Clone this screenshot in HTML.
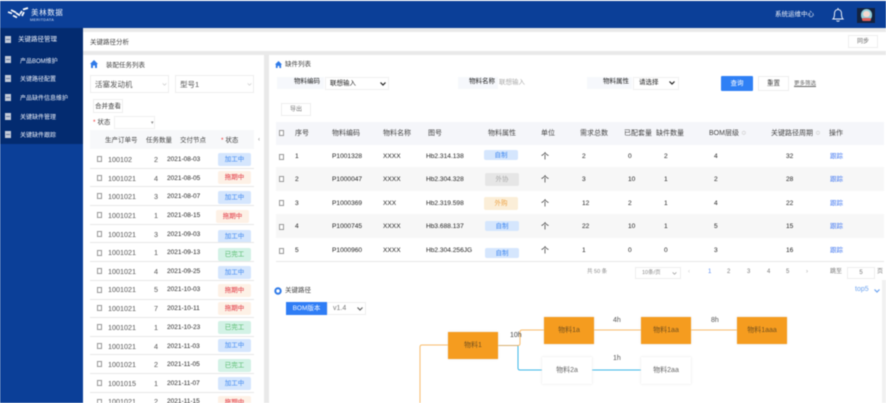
<!DOCTYPE html>
<html lang="zh"><head><meta charset="utf-8"><style>
html,body{margin:0;padding:0;background:#fff}
body{width:886px;height:403px;position:relative;overflow:hidden;font-family:"Liberation Sans","Noto Sans CJK SC",sans-serif;font-size:7px;color:#444}
div,span,svg{position:absolute;box-sizing:border-box}
#w{left:0;top:0;width:886px;height:403px;overflow:hidden;background:#e9e9e9;filter:blur(.45px)}
.t{white-space:nowrap;line-height:14px}
.s{color:#eef2fb;font-size:6px;left:20px}
.i{left:5px;width:6px;height:7px;background:#c4cbd9}
.i:after{content:"";position:absolute;left:1px;top:3px;width:4px;height:1px;background:#6b7da0}
.c{width:5px;height:6px;border:1px solid #999;background:#fff}
.tag{width:33px;height:13px;border-radius:2px;text-align:center;line-height:14px;font-size:6.5px}
.b{background:#d5e6fd;color:#3f88f0}.r{background:#fdf1e6;color:#e0303c}.g{background:#d3f2e6;color:#55ba6c}
.f{font-size:7.2px;color:#555}.k{color:#222;font-size:6.5px}.h{color:#444}
.tb{width:34px;height:10px;border-radius:2px;text-align:center;line-height:11px;font-size:6.5px}
.a{color:#3f76f0}.d{color:#222;font-size:6.6px}
.n{width:50px;height:27px;text-align:center;line-height:28px;font-size:7px;color:#666;box-shadow:0 0 2px #e0e0e0;background:#fff}
.o{background:#f59c1f;color:#76521f}
.hl{height:1px;background:#e7e7e7}
</style></head><body><div id="w">
<div style="left:0;top:1px;width:886px;height:27px;background:#0b3f98"></div>
<div style="left:0;top:0;width:886px;height:1px;background:#f4f6fa"></div>
<div style="left:0;top:28px;width:83px;height:375px;background:#0b3f98"></div>
<div style="left:0;top:28px;width:83px;height:116px;background:#032b70"></div>
<svg style="left:7px;top:7px" width="22" height="14" viewBox="0 0 22 14"><path d="M1 5l4 1.500M4 3l5 2.500M6 8.500l4 2M9 6l4 2.500M13 7l2-3M15 9l2-4M16 2.500l5-1.500" stroke="#fff" stroke-width="1.700" fill="none"/></svg>
<span class="t" style="left:31px;top:6px;color:#eef3fb;font-size:7.5px;letter-spacing:.6px">美林数据</span>
<span class="t" style="left:30px;top:13px;color:#dbe4f4;font-size:3.800px;letter-spacing:.3px">MERITDATA</span>
<span class="t" style="left:775px;top:8px;color:#f0f4fb;font-size:6.5px">系统运维中心</span>
<svg style="left:831px;top:7px" width="14" height="16" viewBox="0 0 14 16"><path d="M2 12c1.500-1.500 1.500-3 1.500-5C3.500 4 5 2.500 7 2.500S10.500 4 10.500 7c0 2 0 3.500 1.500 5zM5.500 13.500c.8 1 2.200 1 3 0M7 1v1.500" stroke="#eef2fa" stroke-width="1" fill="none"/></svg>
<div style="left:857px;top:8px;width:18px;height:15px;background:#14233f"></div>
<div style="left:861px;top:9px;width:11px;height:12px;border-radius:6px;background:#8fd0dc"></div>
<div style="left:863px;top:11px;width:7px;height:6px;border-radius:3px;background:#f3d9cf"></div>
<div style="left:862px;top:18px;width:9px;height:3px;border-radius:2px;background:#e0605a"></div>

<div class="i" style="top:36px"></div><span class="t s" style="left:18px;top:33px;font-size:6.500px">关键路径管理</span>
<div class="i" style="top:56px"></div><span class="t s" style="top:55px">产品BOM维护</span>
<div class="i" style="top:75px"></div><span class="t s" style="top:73px">关键路径配置</span>
<div class="i" style="top:94px"></div><span class="t s" style="top:92px">产品缺件信息维护</span>
<div class="i" style="top:113px"></div><span class="t s" style="top:111px">关键缺件管理</span>
<div class="i" style="top:131px"></div><span class="t s" style="top:129px">关键缺件跟踪</span>

<div style="left:83px;top:32px;width:803px;height:19px;background:#fff"></div>
<span class="t" style="left:90px;top:36px;font-size:6.500px">关键路径分析</span>
<div style="left:848px;top:35px;width:30px;height:13px;background:#fff;border:1px solid #eee;text-align:center;line-height:13px;font-size:6px;color:#666">同步</div>

<!-- left panel -->
<div style="left:83px;top:55px;width:181px;height:348px;background:#fff"></div>
<svg style="left:90px;top:60px" width="8" height="8" viewBox="0 0 8 8"><path d="M4 0L0 4h1v4h2V5.500h2V8h2V4h1z" fill="#2f7ae8"/></svg>
<span class="t" style="left:106px;top:59px;font-size:6.500px">装配任务列表</span>
<div style="left:90px;top:75px;width:79px;height:18px;border:1px solid #eee"></div>
<span class="t f" style="left:95px;top:78px;font-size:7.5px">活塞发动机</span>
<svg style="left:162px;top:83px" width="5" height="3" viewBox="0 0 6 4"><path d="M.5.5L3 3l2.500-2.500" stroke="#ccc" fill="none"/></svg>
<div style="left:175px;top:75px;width:79px;height:18px;border:1px solid #eee"></div>
<span class="t f" style="left:180px;top:78px;font-size:7.5px">型号1</span>
<svg style="left:247px;top:83px" width="5" height="3" viewBox="0 0 6 4"><path d="M.5.5L3 3l2.500-2.500" stroke="#ccc" fill="none"/></svg>
<div style="left:93px;top:99px;width:30px;height:14px;border:1px solid #eee;text-align:center;line-height:13px;font-size:6.500px;color:#444">合并查看</div>
<span class="t" style="left:93px;top:116px;font-size:6.500px"><span style="position:static;color:#e33">*</span> 状态</span>
<div style="left:114px;top:116px;width:41px;height:13px;border:1px solid #f0f0f0"></div>
<span class="t" style="left:151px;top:116px;color:#888;font-size:5px">▾</span>
<div style="left:90px;top:130px;width:164px;height:19px;background:#f7f8fa"></div>
<span class="t h" style="left:105px;top:134px;font-size:6.500px">生产订单号</span>
<span class="t h" style="left:146px;top:134px;font-size:6.500px">任务数量</span>
<span class="t h" style="left:180px;top:134px;font-size:6.500px">交付节点</span>
<span class="t h" style="left:221px;top:134px;font-size:6.500px"><span style="position:static;color:#e33">*</span> 状态</span>
<span class="t" style="left:258px;top:133px;color:#888;font-size:6px">‹</span>

<div class="c" style="left:97px;top:156px"></div><span class="t f" style="left:108px;top:153px">100102</span><span class="t f" style="left:154px;top:153px">2</span><span class="t k" style="left:167px;top:153px">2021-08-03</span><div class="tag b" style="left:218px;top:153px">加工中</div>
<div class="hl" style="left:90px;top:168px;width:164px"></div>
<div class="c" style="left:97px;top:175px"></div><span class="t f" style="left:108px;top:172px">1001021</span><span class="t f" style="left:154px;top:172px">4</span><span class="t k" style="left:167px;top:172px">2021-08-05</span><div class="tag r" style="left:218px;top:171px">拖期中</div>
<div class="hl" style="left:90px;top:186px;width:164px"></div>
<div class="c" style="left:97px;top:193px"></div><span class="t f" style="left:108px;top:190px">1001021</span><span class="t f" style="left:154px;top:190px">3</span><span class="t k" style="left:167px;top:190px">2021-08-07</span><div class="tag b" style="left:218px;top:191px">加工中</div>
<div class="hl" style="left:90px;top:205px;width:164px"></div>
<div class="c" style="left:97px;top:212px"></div><span class="t f" style="left:108px;top:209px">1001021</span><span class="t f" style="left:154px;top:209px">1</span><span class="t k" style="left:167px;top:209px">2021-08-15</span><div class="tag r" style="left:216px;top:210px">拖期中</div>
<div class="hl" style="left:90px;top:224px;width:164px"></div>
<div class="c" style="left:97px;top:231px"></div><span class="t f" style="left:108px;top:228px">1001021</span><span class="t f" style="left:154px;top:228px">3</span><span class="t k" style="left:167px;top:228px">2021-09-03</span><div class="tag b" style="left:218px;top:230px">加工中</div>
<div class="hl" style="left:90px;top:242px;width:164px"></div>
<div class="c" style="left:97px;top:250px"></div><span class="t f" style="left:108px;top:246px">1001021</span><span class="t f" style="left:154px;top:246px">1</span><span class="t k" style="left:167px;top:246px">2021-09-13</span><div class="tag g" style="left:218px;top:248px">已完工</div>
<div class="hl" style="left:90px;top:261px;width:164px"></div>
<div class="c" style="left:97px;top:268px"></div><span class="t f" style="left:108px;top:265px">1001021</span><span class="t f" style="left:154px;top:265px">4</span><span class="t k" style="left:167px;top:265px">2021-09-25</span><div class="tag b" style="left:218px;top:266px">加工中</div>
<div class="hl" style="left:90px;top:280px;width:164px"></div>
<div class="c" style="left:97px;top:287px"></div><span class="t f" style="left:108px;top:283px">1001021</span><span class="t f" style="left:154px;top:283px">5</span><span class="t k" style="left:167px;top:283px">2021-10-03</span><div class="tag r" style="left:218px;top:284px">拖期中</div>
<div class="hl" style="left:90px;top:299px;width:164px"></div>
<div class="c" style="left:97px;top:305px"></div><span class="t f" style="left:108px;top:302px">1001021</span><span class="t f" style="left:154px;top:302px">7</span><span class="t k" style="left:167px;top:302px">2021-10-11</span><div class="tag r" style="left:218px;top:302px">拖期中</div>
<div class="hl" style="left:90px;top:317px;width:164px"></div>
<div class="c" style="left:97px;top:324px"></div><span class="t f" style="left:108px;top:321px">1001021</span><span class="t f" style="left:154px;top:321px">1</span><span class="t k" style="left:167px;top:321px">2021-10-23</span><div class="tag g" style="left:218px;top:321px">已完工</div>
<div class="hl" style="left:90px;top:336px;width:164px"></div>
<div class="c" style="left:97px;top:343px"></div><span class="t f" style="left:108px;top:340px">1001021</span><span class="t f" style="left:154px;top:340px">4</span><span class="t k" style="left:167px;top:340px">2021-11-03</span><div class="tag b" style="left:218px;top:339px">加工中</div>
<div class="hl" style="left:90px;top:354px;width:164px"></div>
<div class="c" style="left:97px;top:361px"></div><span class="t f" style="left:108px;top:358px">1001021</span><span class="t f" style="left:154px;top:358px">2</span><span class="t k" style="left:167px;top:358px">2021-11-05</span><div class="tag g" style="left:218px;top:359px">已完工</div>
<div class="hl" style="left:90px;top:373px;width:164px"></div>
<div class="c" style="left:97px;top:380px"></div><span class="t f" style="left:108px;top:377px">1001015</span><span class="t f" style="left:154px;top:377px">1</span><span class="t k" style="left:167px;top:377px">2021-11-07</span><div class="tag b" style="left:218px;top:377px">加工中</div>
<div class="hl" style="left:90px;top:392px;width:164px"></div>
<div class="c" style="left:97px;top:399px"></div><span class="t f" style="left:108px;top:395px">1001021</span><span class="t f" style="left:154px;top:395px">2</span><span class="t k" style="left:167px;top:395px">2021-11-15</span><div class="tag r" style="left:218px;top:396px">拖期中</div>

<!-- right panel -->
<div style="left:269px;top:55px;width:617px;height:348px;background:#fff"></div>
<svg style="left:275px;top:61px" width="7" height="7" viewBox="0 0 8 8"><path d="M4 0L0 4h1v4h2V5.500h2V8h2V4h1z" fill="#2f7ae8"/></svg>
<span class="t" style="left:285px;top:58px;font-size:6.500px">缺件列表</span>
<div style="left:277px;top:77px;width:47px;height:12px;background:#f6f8fc"></div>
<span class="t k" style="left:294px;top:75px">物料编码</span>
<div style="left:325px;top:77px;width:64px;height:13px;border:1px solid #f0f0f0"></div>
<span class="t" style="left:330px;top:77px;font-size:6.500px;color:#222">联想输入</span>
<svg style="left:380px;top:82px" width="6" height="4" viewBox="0 0 6 4"><path d="M.5.5L3 3l2.500-2.500" stroke="#222" stroke-width="1.200" fill="none"/></svg>
<div style="left:458px;top:77px;width:40px;height:12px;background:#f6f8fc"></div>
<span class="t k" style="left:469px;top:75px">物料名称</span>
<span class="t" style="left:499px;top:76px;font-size:6.500px;color:#aaa">联想输入</span>
<div style="left:587px;top:77px;width:45px;height:12px;background:#f6f8fc"></div>
<span class="t k" style="left:603px;top:75px">物料属性</span>
<div style="left:633px;top:77px;width:46px;height:13px;border:1px solid #f0f0f0"></div>
<span class="t" style="left:639px;top:76px;font-size:6.500px;color:#222">请选择</span>
<svg style="left:669px;top:81px" width="6" height="4" viewBox="0 0 6 4"><path d="M.5.5L3 3l2.500-2.500" stroke="#222" stroke-width="1.200" fill="none"/></svg>
<div style="left:721px;top:76px;width:32px;height:15px;background:#2f80f5;border-radius:1px;color:#fff;text-align:center;line-height:16px;font-size:6.500px">查询</div>
<div style="left:758px;top:76px;width:31px;height:15px;border:1px solid #eee;color:#444;text-align:center;line-height:14px;font-size:6.500px">重置</div>
<span class="t" style="left:794px;top:77px;font-size:5.500px;color:#666;text-decoration:underline">更多筛选</span>
<div style="left:281px;top:103px;width:30px;height:13px;border:1px solid #eee;color:#777;text-align:center;line-height:13px;font-size:6px">导出</div>

<div style="left:276px;top:122px;width:608px;height:23px;background:#f5f6fa"></div>
<div style="left:276px;top:167px;width:608px;height:24px;background:#f7f7f7"></div>
<div style="left:276px;top:214px;width:608px;height:24px;background:#f7f7f7"></div>
<div class="hl" style="left:276px;top:261px;width:608px"></div>
<div class="c" style="left:279px;top:130px"></div>
<span class="t h" style="left:295px;top:127px">序号</span><span class="t h" style="left:332px;top:127px">物料编码</span><span class="t h" style="left:383px;top:127px">物料名称</span><span class="t h" style="left:428px;top:127px">图号</span><span class="t h" style="left:488px;top:127px">物料属性</span><span class="t h" style="left:541px;top:127px">单位</span><span class="t h" style="left:580px;top:127px">需求总数</span><span class="t h" style="left:624px;top:127px">已配套量</span><span class="t h" style="left:656px;top:127px">缺件数量</span><span class="t h" style="left:709px;top:127px">BOM层级 <span style="position:static;color:#ccc">≎</span></span><span class="t h" style="left:771px;top:127px">关键路径周期 <span style="position:static;color:#ccc">≎</span></span><span class="t h" style="left:829px;top:127px">操作</span>

<div class="c" style="left:279px;top:154px"></div><span class="t d" style="left:295px;top:150px">1</span><span class="t d" style="left:332px;top:150px">P1001328</span><span class="t d" style="left:383px;top:150px">XXXX</span><span class="t d" style="left:426px;top:150px">Hb2.314.138</span><div class="tb b" style="left:484px;top:150px">自制</div><span class="t d" style="left:541px;top:150px;font-size:8px">个</span><span class="t d" style="left:582px;top:150px">2</span><span class="t d" style="left:628px;top:150px">0</span><span class="t d" style="left:664px;top:150px">2</span><span class="t d" style="left:714px;top:150px">4</span><span class="t d" style="left:786px;top:150px">32</span><span class="t a" style="left:830px;top:150px;font-size:6.500px">跟踪</span>

<div class="c" style="left:279px;top:176px"></div><span class="t d" style="left:295px;top:173px">2</span><span class="t d" style="left:332px;top:173px">P1000047</span><span class="t d" style="left:383px;top:173px">XXXX</span><span class="t d" style="left:426px;top:173px">Hb2.304.328</span><div class="tb" style="left:485px;top:173px;height:13px;line-height:14px;background:#e6e6e6;color:#aaa">外协</div><span class="t d" style="left:541px;top:173px;font-size:8px">个</span><span class="t d" style="left:582px;top:173px">3</span><span class="t d" style="left:628px;top:173px">10</span><span class="t d" style="left:664px;top:173px">1</span><span class="t d" style="left:714px;top:173px">2</span><span class="t d" style="left:786px;top:173px">28</span><span class="t a" style="left:830px;top:173px;font-size:6.500px">跟踪</span>

<div class="c" style="left:279px;top:200px"></div><span class="t d" style="left:295px;top:197px">3</span><span class="t d" style="left:332px;top:197px">P1000369</span><span class="t d" style="left:383px;top:197px">XXX</span><span class="t d" style="left:426px;top:197px">Hb2.319.598</span><div class="tb" style="left:484px;top:197px;height:13px;line-height:14px;background:#fbeed8;color:#eda54a">外购</div><span class="t d" style="left:541px;top:197px;font-size:8px">个</span><span class="t d" style="left:582px;top:197px">12</span><span class="t d" style="left:628px;top:197px">2</span><span class="t d" style="left:664px;top:197px">1</span><span class="t d" style="left:714px;top:197px">4</span><span class="t d" style="left:786px;top:197px">22</span><span class="t a" style="left:830px;top:197px;font-size:6.500px">跟踪</span>

<div class="c" style="left:279px;top:224px"></div><span class="t d" style="left:295px;top:220px">4</span><span class="t d" style="left:332px;top:220px">P1000745</span><span class="t d" style="left:383px;top:220px">XXXX</span><span class="t d" style="left:426px;top:220px">Hb3.688.137</span><div class="tb b" style="left:485px;top:221px">自制</div><span class="t d" style="left:541px;top:220px;font-size:8px">个</span><span class="t d" style="left:582px;top:220px">22</span><span class="t d" style="left:628px;top:220px">10</span><span class="t d" style="left:664px;top:220px">1</span><span class="t d" style="left:714px;top:220px">5</span><span class="t d" style="left:786px;top:220px">15</span><span class="t a" style="left:830px;top:220px;font-size:6.500px">跟踪</span>

<div class="c" style="left:279px;top:248px"></div><span class="t d" style="left:295px;top:244px">5</span><span class="t d" style="left:332px;top:244px">P1000960</span><span class="t d" style="left:383px;top:244px">XXXX</span><span class="t d" style="left:426px;top:244px">Hb2.304.256JG</span><div class="tb b" style="left:485px;top:248px">自制</div><span class="t d" style="left:541px;top:244px;font-size:8px">个</span><span class="t d" style="left:582px;top:244px">1</span><span class="t d" style="left:628px;top:244px">0</span><span class="t d" style="left:664px;top:244px">0</span><span class="t d" style="left:714px;top:244px">3</span><span class="t d" style="left:786px;top:244px">16</span><span class="t a" style="left:830px;top:244px;font-size:6.500px">跟踪</span>

<span class="t" style="left:587px;top:265px;font-size:5.500px;color:#888">共 50 条</span>
<div style="left:635px;top:267px;width:46px;height:12px;border:1px solid #eee"></div>
<span class="t" style="left:642px;top:266px;font-size:5.500px;color:#888">10条/页</span>
<svg style="left:672px;top:272px" width="5" height="3" viewBox="0 0 6 4"><path d="M.5.5L3 3l2.500-2.500" stroke="#999" fill="none"/></svg>
<span class="t" style="left:688px;top:265px;font-size:6px;color:#ccc">‹</span>
<span class="t" style="left:708px;top:265px;font-size:6px;color:#5a8cf0">1</span><span class="t" style="left:727px;top:265px;font-size:6px;color:#777">2</span><span class="t" style="left:747px;top:265px;font-size:6px;color:#777">3</span><span class="t" style="left:767px;top:265px;font-size:6px;color:#777">4</span><span class="t" style="left:786px;top:265px;font-size:6px;color:#777">5</span><span class="t" style="left:806px;top:265px;font-size:6px;color:#aaa">›</span>
<span class="t" style="left:830px;top:265px;font-size:6px;color:#777">跳至</span>
<div style="left:847px;top:267px;width:28px;height:12px;border:1px solid #eee;text-align:center;line-height:11px;font-size:6px;color:#777">5</div>
<span class="t" style="left:877px;top:265px;font-size:6px;color:#777">页</span>

<!-- path -->
<svg style="left:274px;top:287px" width="8" height="8" viewBox="0 0 8 8"><circle cx="4" cy="4" r="2.700" fill="none" stroke="#2f7ae8" stroke-width="2"/></svg>
<span class="t" style="left:285px;top:284px;font-size:6.500px">关键路径</span>
<span class="t" style="left:855px;top:283px;font-size:7px;color:#6ea4f0">top5</span>
<svg style="left:874px;top:289px" width="6" height="4" viewBox="0 0 6 4"><path d="M.5.5L3 3l2.500-2.500" stroke="#6ea4f0" stroke-width="1.200" fill="none"/></svg>
<div style="left:286px;top:302px;width:41px;height:13px;background:#2f7df5;color:#f4f8ff;text-align:center;line-height:14px;font-size:6.500px">BOM版本</div>
<div style="left:327px;top:302px;width:39px;height:13px;border:1px solid #eee"></div>
<span class="t" style="left:333px;top:302px;font-size:7px;color:#777">v1.4</span>
<svg style="left:357px;top:307px" width="6" height="4" viewBox="0 0 6 4"><path d="M.5.5L3 3l2.500-2.500" stroke="#555" fill="none"/></svg>
<div style="left:882px;top:280px;width:4px;height:123px;background:#f1f1f1"></div>

<svg style="left:415px;top:310px" width="350" height="93" viewBox="0 0 350 93" fill="none">
<path d="M5 93V37q0-2 2-2H35" stroke="#f8bc6c" stroke-width="1"/>
<path d="M103 35v23q0 2 2 2H226" stroke="#3bb8e8" stroke-width="1"/>
<path d="M82 35.500H103q2 0 2-2V22q0-2 2-2H322" stroke="#f8bc6c" stroke-width="1"/>
<path d="M82 35.500h21" stroke="#d8b070" stroke-width="1"/>
</svg>
<div class="n o" style="left:448px;top:332px">物料1</div>
<div class="n o" style="left:544px;top:317px">物料1a</div>
<div class="n o" style="left:641px;top:317px">物料1aa</div>
<div class="n o" style="left:737px;top:317px">物料1aaa</div>
<div class="n" style="left:542px;top:357px">物料2a</div>
<div class="n" style="left:641px;top:357px">物料2aa</div>
<span class="t" style="left:510px;top:329px;font-size:7px;color:#444">10h</span>
<span class="t" style="left:613px;top:314px;font-size:7px;color:#555">4h</span>
<span class="t" style="left:711px;top:314px;font-size:7px;color:#555">8h</span>
<span class="t" style="left:613px;top:352px;font-size:7px;color:#555">1h</span>
</div></body></html>
